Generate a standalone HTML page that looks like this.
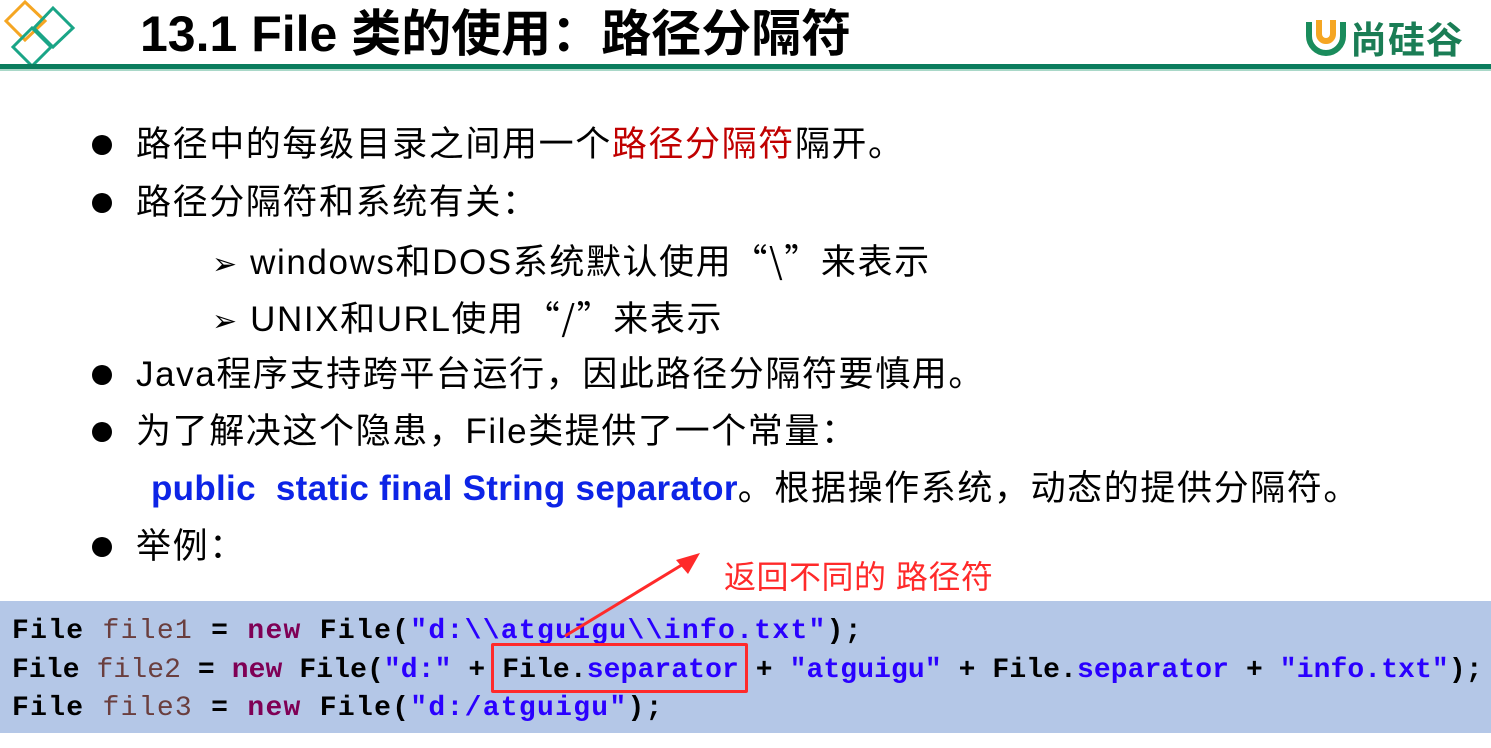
<!DOCTYPE html>
<html><head><meta charset="utf-8"><style>
body{margin:0;width:1491px;height:748px;background:#fff;position:relative;overflow:hidden;font-family:"Liberation Sans","Noto Sans CJK SC",sans-serif;}
.a{position:absolute;white-space:nowrap;}
.t{font-size:35px;letter-spacing:1.6px;color:#000;line-height:40px;}
.q{font-family:"Noto Sans CJK SC",sans-serif;}
.dot{position:absolute;width:20px;height:20px;border-radius:50%;background:#000;}
.code{position:absolute;left:0;top:601px;width:1491px;height:132px;background:#b4c7e7;}
.c{position:absolute;left:12px;font-family:"Liberation Mono",monospace;font-weight:bold;font-size:28px;letter-spacing:1.3px;color:#000;white-space:pre;line-height:30px;}
.v{color:#6a3e3e;font-weight:normal}.k{color:#7f0055}.s{color:#2a00ff}
</style></head><body>
<svg class="a" style="left:0;top:0" width="80" height="70">
<polygon points="25,2 45,21 25,40 6,21" fill="none" stroke="#f5a623" stroke-width="3"/>
<polygon points="53,8 73,28 53,47 34,28" fill="none" stroke="#1aa587" stroke-width="3"/>
<polygon points="32,28 51,47 32,66 13,47" fill="none" stroke="#1aa587" stroke-width="3"/>
</svg>
<div class="a" style="left:140px;top:4px;font-size:50px;font-weight:bold;line-height:60px">13.1 File 类的使用：路径分隔符</div>
<div class="a" style="left:0;top:64px;width:1491px;height:5px;background:#0b7d5e"></div>
<div class="a" style="left:0;top:69px;width:1491px;height:2px;background:#a9d8c8"></div>
<svg class="a" style="left:1303px;top:12px" width="46" height="46"><path d="M6 10 V24 A17 17 0 0 0 40 24 V10" fill="none" stroke="#1a8c5c" stroke-width="6"/><path d="M16 8 V22 A7 7 0 0 0 30 22 V8" fill="none" stroke="#f5a623" stroke-width="6"/></svg>
<div class="a" style="left:1350px;top:10px;font-size:37px;font-weight:bold;color:#1a7d55;letter-spacing:1px">尚硅谷</div>

<div class="dot" style="left:92px;top:135px"></div>
<div class="a t" style="left:136px;top:125px">路径中的每级目录之间用一个<span style="color:#c00000">路径分隔符</span>隔开。</div>
<div class="dot" style="left:92px;top:193px"></div>
<div class="a t" style="left:136px;top:183px">路径分隔符和系统有关：</div>
<div class="a t" style="left:212px;top:240px"><span style="font-size:30px">➢</span> windows和DOS系统默认使用<span class="q">“\”</span>来表示</div>
<div class="a t" style="left:212px;top:297px"><span style="font-size:30px">➢</span> UNIX和URL使用<span class="q">“/”</span>来表示</div>
<div class="dot" style="left:92px;top:365px"></div>
<div class="a t" style="left:136px;top:355px">Java程序支持跨平台运行，因此路径分隔符要慎用。</div>
<div class="dot" style="left:92px;top:422px"></div>
<div class="a t" style="left:136px;top:412px">为了解决这个隐患，File类提供了一个常量：</div>
<div class="a t" style="left:151px;top:469px"><b style="color:#0d24e6;letter-spacing:0.3px">public&nbsp; static final String separator</b>。根据操作系统，动态的提供分隔符。</div>
<div class="dot" style="left:92px;top:537px"></div>
<div class="a t" style="left:136px;top:527px">举例：</div>
<div class="a" style="left:724px;top:552px;font-size:32px;color:#ff2a2a;letter-spacing:0.5px">返回不同的 路径符</div>

<div class="code"></div>
<div class="c" style="top:617px">File <span class="v">file1</span> = <span class="k">new</span> File(<span class="s">"d:\\atguigu\\info.txt"</span>);</div>
<div class="c" style="top:656px;letter-spacing:0.1px">File <span class="v">file2</span> = <span class="k">new</span> File(<span class="s">"d:"</span> + File.<span class="s">separator</span> + <span class="s">"atguigu"</span> + File.<span class="s">separator</span> + <span class="s">"info.txt"</span>);</div>
<div class="c" style="top:694px">File <span class="v">file3</span> = <span class="k">new</span> File(<span class="s">"d:/atguigu"</span>);</div>
<div class="a" style="left:491px;top:643px;width:257px;height:50px;border:3px solid #ff2a2a;border-radius:2px;box-sizing:border-box"></div>
<svg class="a" style="left:0;top:0" width="1491" height="748"><line x1="565" y1="636" x2="690" y2="560" stroke="#ff2a2a" stroke-width="3"/><polygon points="700,553 676,560 688,574" fill="#ff2a2a"/></svg>
</body></html>
